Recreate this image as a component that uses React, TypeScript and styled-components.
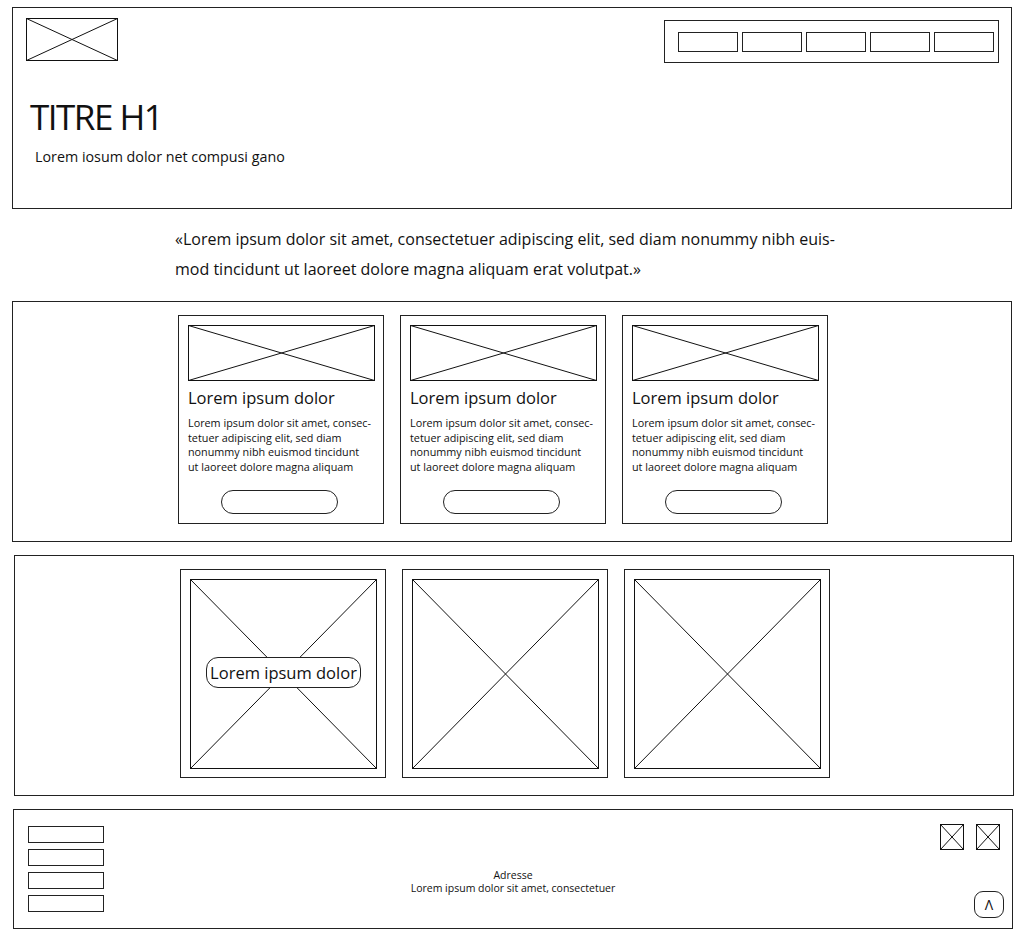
import React, { FC } from 'react';
import styled, { createGlobalStyle } from 'styled-components';

const GlobalStyle = createGlobalStyle`
    body {
        margin: 0;
        background: #fff;
        color: #111;
        font-family: 'Open Sans', 'Noto Sans', sans-serif;
    }
`;

const Page = styled.div`
    width: 1024px;
    box-sizing: border-box;
    padding: 7px 0 16px 12px;
    display: flex;
    flex-direction: column;
`;

const Panel = styled.section<{ $height: number; $shift?: number; $top?: number }>`
    box-sizing: border-box;
    width: 1000px;
    height: ${p => p.$height}px;
    margin-left: ${p => p.$shift ?? 0}px;
    margin-top: ${p => p.$top ?? 0}px;
    border: 1px solid #222;
`;

const CrossSvg = styled.svg`
    display: block;
    flex-shrink: 0;
`;

const CrossBox: FC<{ w: number; h: number }> = ({ w, h }) => (
    <CrossSvg width={w} height={h} viewBox={`0 0 ${w} ${h}`}>
        <rect x={0.5} y={0.5} width={w - 1} height={h - 1} fill="none" stroke="#111" />
        <line x1={0.5} y1={0.5} x2={w - 0.5} y2={h - 0.5} stroke="#111" />
        <line x1={w - 0.5} y1={0.5} x2={0.5} y2={h - 0.5} stroke="#111" />
    </CrossSvg>
);

/* header */
const Header = styled(Panel)`
    display: flex;
    flex-direction: column;
    padding: 10px 12px 0 13px;
`;

const TopRow = styled.div`
    display: flex;
    justify-content: space-between;
    align-items: flex-start;
`;

const Nav = styled.nav`
    box-sizing: border-box;
    width: 335px;
    height: 43px;
    margin-top: 2px;
    border: 1px solid #222;
    padding-left: 13px;
    display: flex;
    align-items: center;
    gap: 4px;
`;

const NavItem = styled.div`
    box-sizing: border-box;
    width: 60px;
    height: 20px;
    border: 1px solid #222;
`;

const Title = styled.h1`
    margin: 36px 0 0 4px;
    font-size: 35px;
    line-height: 36px;
    font-weight: 400;
    letter-spacing: -1.5px;
`;

const Lead = styled.p`
    margin: 13px 0 0 9px;
    font-size: 14.3px;
    line-height: 18px;
`;

/* quote */
const Quote = styled.blockquote`
    margin: 15px 0 17px 163px;
    font-size: 16px;
    line-height: 30px;
    white-space: nowrap;
`;

/* cards */
const Row = styled.div`
    display: flex;
    gap: 16px;
    padding: 13px 0 0 165px;
`;

const Card = styled.article`
    box-sizing: border-box;
    width: 206px;
    height: 209px;
    border: 1px solid #222;
    padding: 9px 9px 0;
    display: flex;
    flex-direction: column;
`;

const CardTitle = styled.h2`
    margin: 7px 0 0;
    font-size: 16.5px;
    line-height: 20px;
    font-weight: 400;
`;

const CardText = styled.p`
    margin: 8px 0 0;
    font-size: 10.8px;
    line-height: 14.5px;
    white-space: nowrap;
`;

const PillButton = styled.button`
    box-sizing: border-box;
    width: 117px;
    height: 24px;
    margin: auto 4px 9px 0;
    align-self: center;
    border: 1px solid #222;
    border-radius: 12px;
    background: #fff;
`;

/* gallery */
const Tile = styled.figure`
    box-sizing: border-box;
    width: 206px;
    height: 209px;
    margin: 0;
    border: 1px solid #222;
    padding: 9px 9px 8px;
`;

const TileArt = styled.div`
    display: grid;
    place-items: center;
    > * {
        grid-area: 1 / 1;
    }
`;

const TileLabel = styled.figcaption`
    box-sizing: border-box;
    width: 155px;
    height: 31px;
    margin-top: -4px;
    border: 1px solid #222;
    border-radius: 12px;
    background: #fff;
    font-size: 16.5px;
    line-height: 29px;
    text-align: center;
`;

/* footer */
const Footer = styled(Panel)`
    display: grid;
    grid-template-columns: 1fr auto 1fr;
`;

const LinkList = styled.div`
    display: flex;
    flex-direction: column;
    gap: 6px;
    padding: 16px 0 0 14px;
`;

const LinkBox = styled.div`
    box-sizing: border-box;
    width: 76px;
    height: 17px;
    border: 1px solid #222;
`;

const Address = styled.address`
    padding-top: 59px;
    font-style: normal;
    font-size: 10.5px;
    line-height: 13px;
    text-align: center;
`;

const Side = styled.div`
    display: flex;
    flex-direction: column;
    align-items: flex-end;
    justify-content: space-between;
    padding: 14px 8px 10px 0;
`;

const Socials = styled.div`
    display: flex;
    gap: 12px;
    margin-right: 4px;
`;

const UpButton = styled.button`
    box-sizing: border-box;
    width: 30px;
    height: 27px;
    padding: 0;
    border: 1px solid #222;
    border-radius: 9px;
    background: #fff;
    font-family: 'Open Sans', sans-serif;
    font-size: 14px;
    line-height: 25px;
    color: #111;
`;

const cardLines = [
    'Lorem ipsum dolor sit amet, consec-',
    'tetuer adipiscing elit, sed diam',
    'nonummy nibh euismod tincidunt',
    'ut laoreet dolore magna aliquam',
];

const App: FC = () => (
    <>
        <GlobalStyle />
        <Page>
            <Header $height={202}>
                <TopRow>
                    <CrossBox w={92} h={43} />
                    <Nav>
                        {[0, 1, 2, 3, 4].map(i => (
                            <NavItem key={i} />
                        ))}
                    </Nav>
                </TopRow>
                <Title>TITRE H1</Title>
                <Lead>Lorem iosum dolor net compusi gano</Lead>
            </Header>

            <Quote>
                «Lorem ipsum dolor sit amet, consectetuer adipiscing elit, sed diam nonummy nibh euis-
                <br />
                mod tincidunt ut laoreet dolore magna aliquam erat volutpat.»
            </Quote>

            <Panel $height={241}>
                <Row>
                    {[0, 1, 2].map(i => (
                        <Card key={i}>
                            <CrossBox w={187} h={56} />
                            <CardTitle>Lorem ipsum dolor</CardTitle>
                            <CardText>
                                {cardLines.map((l, j) => (
                                    <React.Fragment key={j}>
                                        {l}
                                        {j < cardLines.length - 1 && <br />}
                                    </React.Fragment>
                                ))}
                            </CardText>
                            <PillButton />
                        </Card>
                    ))}
                </Row>
            </Panel>

            <Panel $height={241} $shift={2} $top={13}>
                <Row>
                    <Tile>
                        <TileArt>
                            <CrossBox w={187} h={190} />
                            <TileLabel>Lorem ipsum dolor</TileLabel>
                        </TileArt>
                    </Tile>
                    <Tile>
                        <CrossBox w={187} h={190} />
                    </Tile>
                    <Tile>
                        <CrossBox w={187} h={190} />
                    </Tile>
                </Row>
            </Panel>

            <Footer $height={120} $shift={1} $top={13}>
                <LinkList>
                    {[0, 1, 2, 3].map(i => (
                        <LinkBox key={i} />
                    ))}
                </LinkList>
                <Address>
                    Adresse
                    <br />
                    Lorem ipsum dolor sit amet, consectetuer
                </Address>
                <Side>
                    <Socials>
                        <CrossBox w={24} h={26} />
                        <CrossBox w={24} h={26} />
                    </Socials>
                    <UpButton aria-label="Retour en haut">Λ</UpButton>
                </Side>
            </Footer>
        </Page>
    </>
);

export default App;
